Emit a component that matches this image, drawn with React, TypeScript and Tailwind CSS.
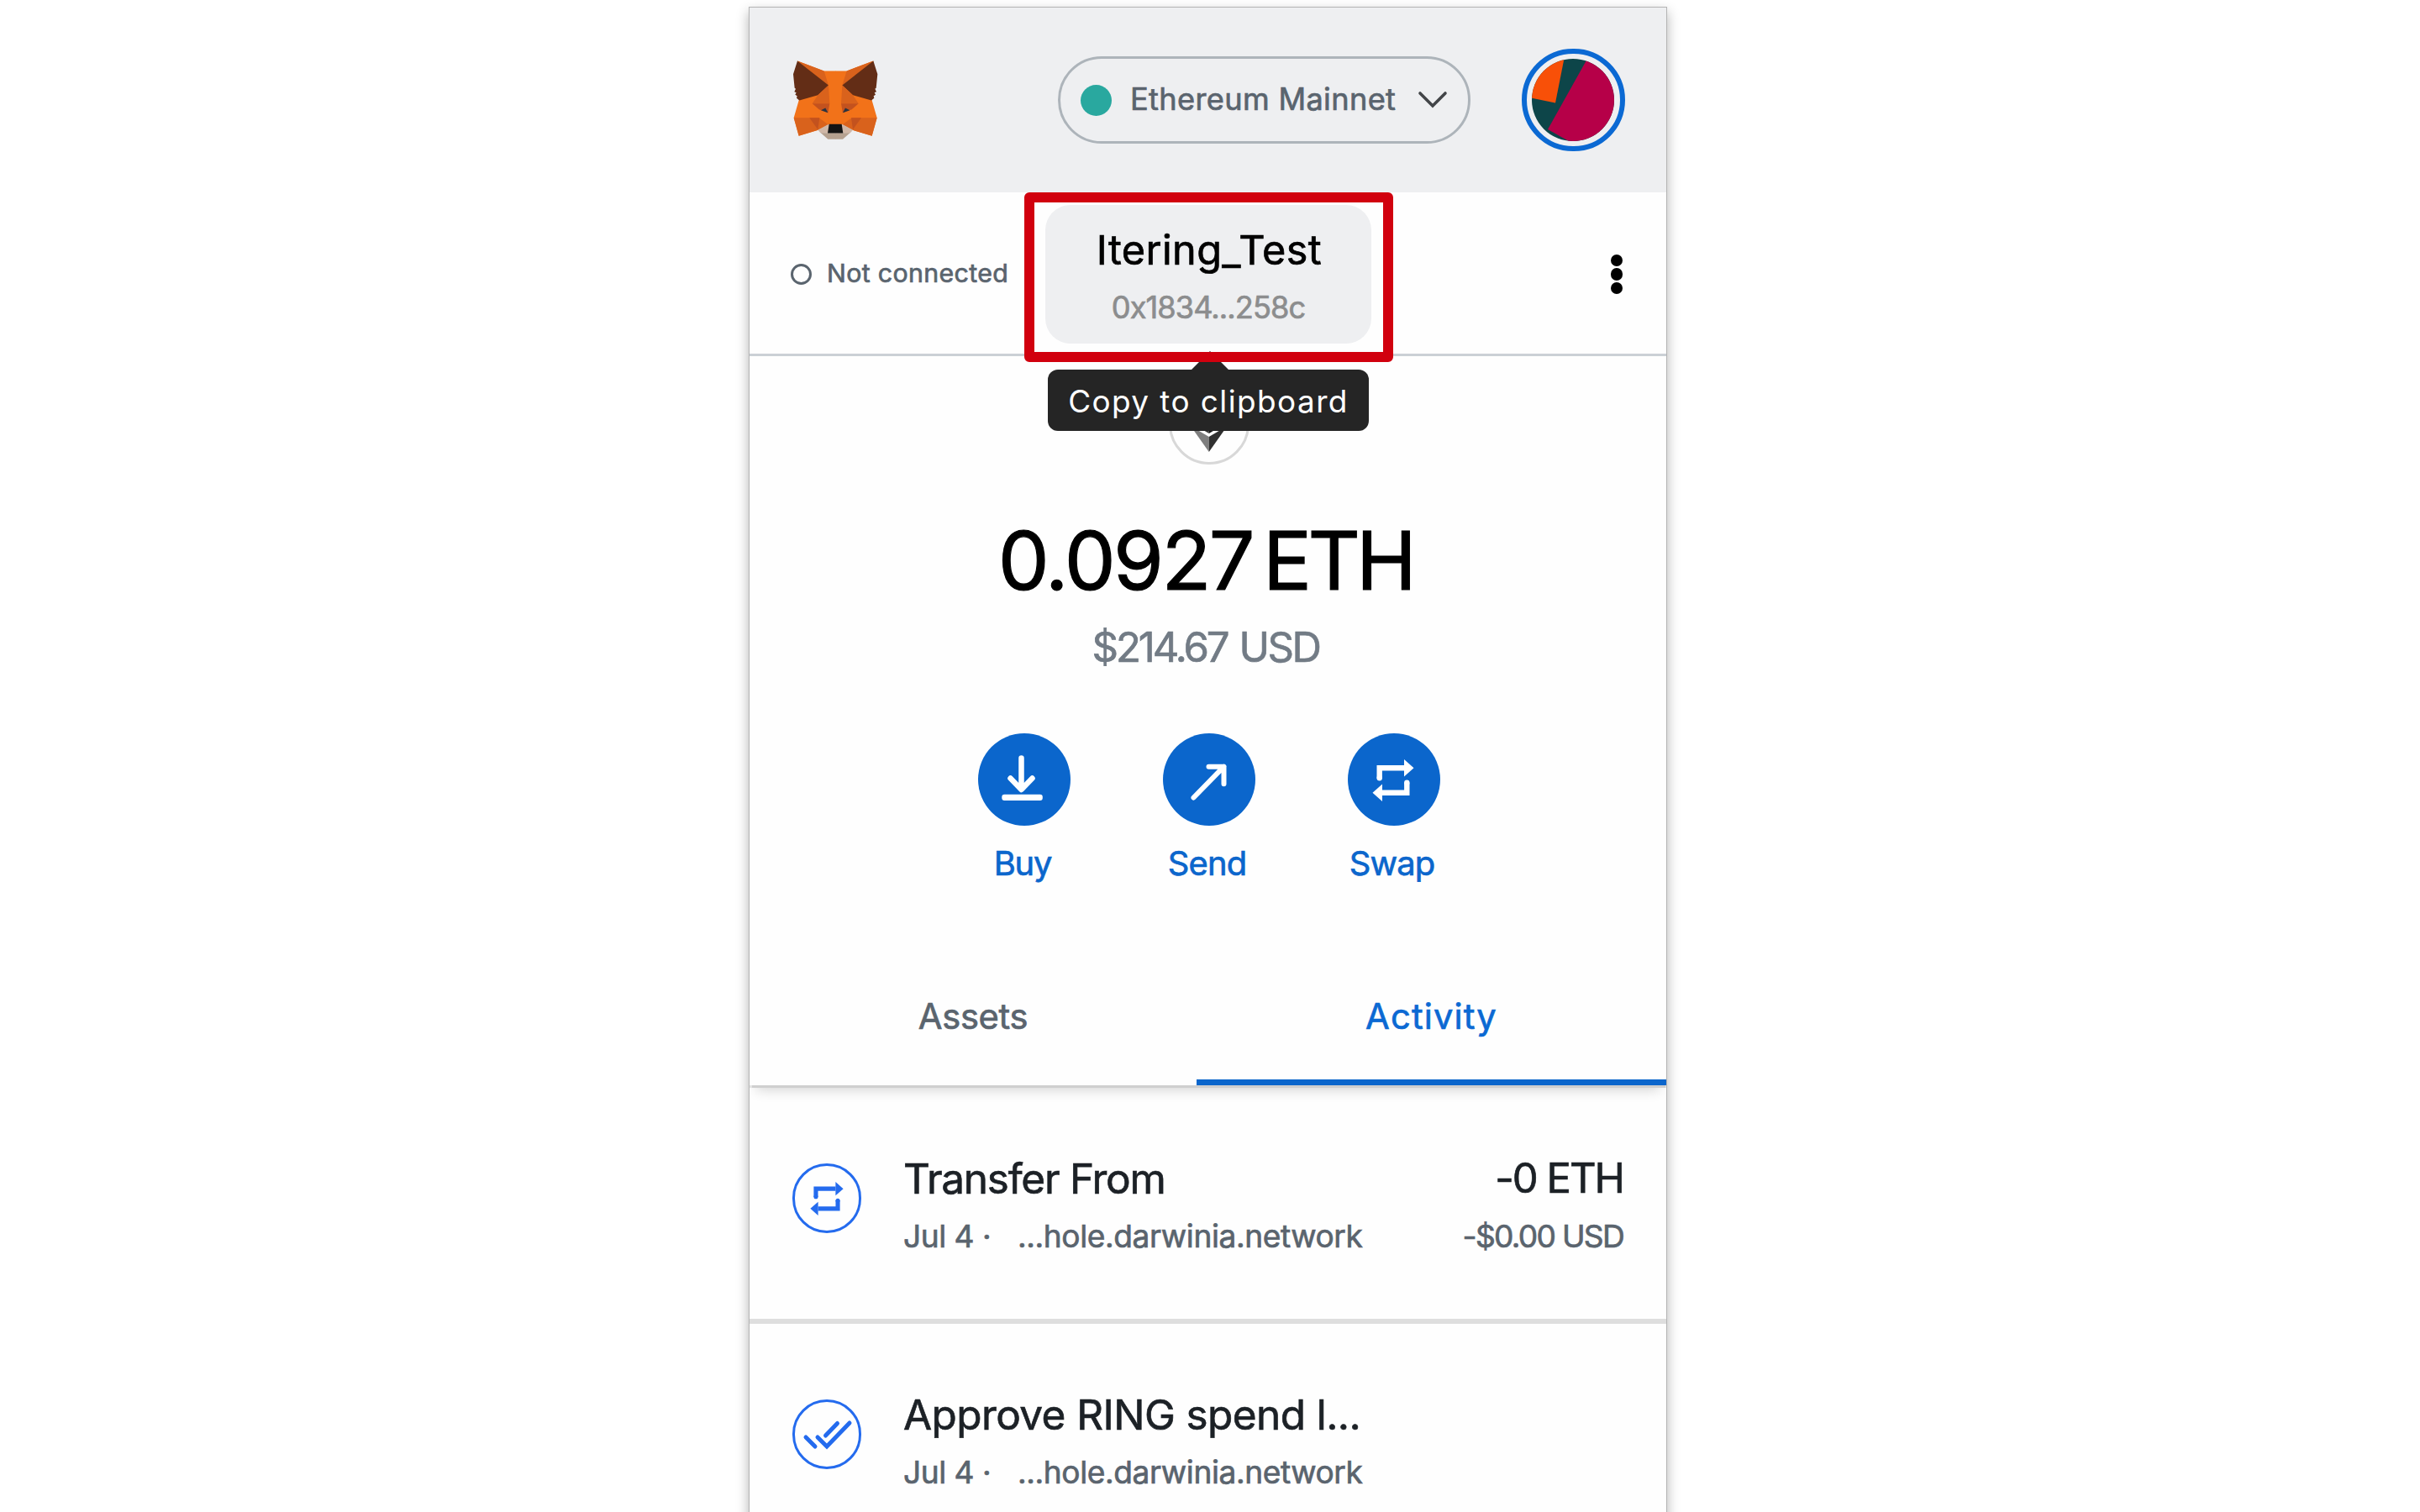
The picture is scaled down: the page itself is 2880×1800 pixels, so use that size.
import React from "react";

function Fox() {
  const half = (
    <>
      <polygon points="57,37 152,73 193,73 193,265 166,265 132,284 62,305 44,240 62,178 58,120" fill="#F27219" />
      <polygon points="57,37 152,73 168,124" fill="#D9621C" />
      <polygon points="57,37 168,124 130,159 64,178 54,170 56,162 49,158 53,150 46,147 51,137 47,134 42,84" fill="#632D16" />
      <polygon points="168,124 130,159 110,189 172,189" fill="#D9621C" />
      <polygon points="110,189 172,189 166,224 134,210" fill="#C3521E" />
      <polygon points="132,212 166,222 170,240 166,265 140,240" fill="#F27219" />
      <polygon points="141,213 157,205 166,222" fill="#2A3441" />
      <polygon points="44,240 134,240 168,265 130,284 62,305" fill="#D9621C" />
      <polygon points="100,240 136,240 130,282" fill="#C3521E" />
      <polygon points="166,264 130,284 142,296 193,296 193,264" fill="#CFB7A7" />
      <polygon points="132,287 142,294 193,296 193,317 166,317" fill="#B5A190" />
      <polygon points="170,263 193,263 193,295 165,295" fill="#141414" />
    </>
  );
  return (
    <svg className="h-[95px] w-[104px] shrink-0" viewBox="36 36 312 284">
      {half}
      <g transform="translate(385 0) scale(-1 1)">{half}</g>
    </svg>
  );
}

function SwapIcon({ className }: { className: string }) {
  return (
    <svg className={className} viewBox="0 0 50 52" fill="none" stroke="currentColor" strokeWidth="6.4">
      <path d="M8.7 23.5V11.2H38" strokeLinejoin="miter" />
      <path d="M41.3 28.5v12.3H12" />
      <circle cx="8.7" cy="23.2" r="3.2" fill="currentColor" stroke="none" />
      <circle cx="41.3" cy="28.8" r="3.2" fill="currentColor" stroke="none" />
      <path d="M38 1l11.5 10.2L38 21.4z" fill="currentColor" stroke="none" />
      <path d="M12 30.600L.5 40.800 12 51z" fill="currentColor" stroke="none" />
    </svg>
  );
}

function Header() {
  return (
    <header className="flex h-[220px] items-center bg-[#eeeff1] pl-[50px]">
      <Fox />
      <div className="ml-[213px] flex h-[104px] w-[491px] items-center rounded-full border-3 border-[#adb4ba] pr-[24px] pl-[24px]">
        <span className="size-[37px] rounded-full bg-[#29a89f]" />
        <span className="mb-[1px] ml-[22px] text-[36.2px] tracking-[0.33px] whitespace-nowrap text-[#5a646e]">Ethereum Mainnet</span>
        <svg className="ml-auto h-[22px] w-[36px]" viewBox="0 0 36 22" fill="none" stroke="#424548" strokeWidth="3.600">
          <path d="M3 3l15 15L33 3" strokeLinecap="round" />
        </svg>
      </div>
      <div className="ml-[61px] flex size-[122.5px] items-center justify-center rounded-full border-[6.5px] border-[#0b69d3]">
        <svg className="size-[98px] rounded-full" viewBox="0 0 98 98">
          <rect width="98" height="98" fill="#0d4549" />
          <path d="M66 0L19 84l32 18h60V0z" fill="#b60048" />
          <path d="M39-3L28 52.500-3 46V-3z" fill="#f85008" />
        </svg>
      </div>
    </header>
  );
}

function AccountBar() {
  return (
    <section className="flex h-[195px] items-start border-b-3 border-[#cbd0d5]">
      <div className="flex h-[192px] w-[352px] items-center pl-[49px]">
        <span className="mt-[2px] size-[25px] rounded-full border-[3.500px] border-[#5a646e]" />
        <span className="mt-[2px] ml-[18px] text-[30.300px] tracking-[0.360px] whitespace-nowrap text-[#5a646e]">Not connected</span>
      </div>
      <div className="relative z-10 mt-[15px] h-[165px] w-[388px] rounded-[30px] bg-[#eeeff1] pt-[24px] text-center">
        <div className="pl-[2px] text-[48.600px] leading-[60px] tracking-[0.380px] text-black">Itering_Test</div>
        <div className="mt-[13px] text-[36.200px] leading-[50px] tracking-[-0.930px] text-[#8c8d8e]">0x1834...258c</div>
        <div className="absolute top-[196px] left-[3px] flex h-[73px] w-[382px] items-center justify-center rounded-[12px] bg-[#252525] pt-[2px] text-[36.900px] tracking-[1.430px] whitespace-nowrap text-white [-webkit-text-stroke:0px]">
          <svg className="absolute -top-[22px] left-[170px] h-[23px] w-[46px]" viewBox="0 0 46 23">
            <path d="M0 23L23 0l23 23z" fill="#252525" />
          </svg>
          Copy to clipboard
        </div>
        <div className="absolute -top-[15px] -right-[26px] -bottom-[22px] -left-[25px] rounded-[6px] border-12 border-[#d1000e]" />
      </div>
      <div className="flex h-[192px] flex-1 flex-col items-end justify-center gap-[2.400px] pt-[3px] pr-[52px]">
        <span className="size-[14.400px] rounded-full bg-black" />
        <span className="size-[14.400px] rounded-full bg-black" />
        <span className="size-[14.400px] rounded-full bg-black" />
      </div>
    </section>
  );
}

function Action({ label, labelClass, children }: { label: string; labelClass: string; children: React.ReactNode }) {
  return (
    <div className="flex w-[110px] flex-col items-center">
      <div className="flex size-[110px] items-center justify-center rounded-full bg-[#0b66cc] text-white">{children}</div>
      <span className={labelClass}>{label}</span>
    </div>
  );
}

function Balance() {
  return (
    <section className="flex flex-col items-center">
      <div className="mt-[33px] ml-[2px] flex size-[96px] justify-center rounded-full border-[3px] border-[#d8d8d8] pt-[7px]">
        <svg className="h-[71px] w-[43.500px]" viewBox="0 0 256 417">
          <path d="M128 0L0 212l128-58z" fill="#8c8c8c" />
          <path d="M128 0l128 212-128-58z" fill="#343434" />
          <path d="M0 212l128 76V154z" fill="#393939" />
          <path d="M256 212l-128 76V154z" fill="#141414" />
          <path d="M0 236l128 181V312z" fill="#7e7e7e" />
          <path d="M256 236L128 417V312z" fill="#303030" />
        </svg>
      </div>
      <div className="mt-[54px] flex gap-[12px] pr-[6px] text-[96.700px] leading-[120px] text-black [-webkit-text-stroke:1.2px]">
        <span className="tracking-[-2.570px]">0.0927</span>
        <span className="tracking-[-4.760px]">ETH</span>
      </div>
      <div className="mt-[13px] flex gap-[14px] pr-[5px] text-[49.100px] leading-[60px] text-[#727b85]">
        <span className="tracking-[-3.070px]">$214.67</span>
        <span className="tracking-[-2.520px]">USD</span>
      </div>
      <div className="mt-[73px] flex gap-[110px] pl-[2px]">
        <Action label="Buy" labelClass="mt-[20px] mr-[3px] text-[39.900px] leading-[50px] tracking-[-1.140px] text-[#0b66cc]">
          <svg className="size-[110px]" viewBox="0 0 110 110" fill="none" stroke="currentColor" strokeWidth="6.500" strokeLinecap="round" strokeLinejoin="round">
            <path d="M51.500 29.500V66M38.500 53.500l13 13.500 13-13.500" />
            <rect x="28.300" y="72.800" width="48.500" height="7.200" rx="3" fill="currentColor" stroke="none" />
          </svg>
        </Action>
        <Action label="Send" labelClass="mt-[20px] mr-[4px] text-[39.900px] leading-[50px] tracking-[-0.810px] text-[#0b66cc]">
          <svg className="size-[110px]" viewBox="0 0 110 110" fill="none" stroke="currentColor" strokeWidth="6" strokeLinecap="round" strokeLinejoin="round">
            <path d="M36.500 76.500L72.500 39.700M54.500 39.700h18v20.500" />
          </svg>
        </Action>
        <Action label="Swap" labelClass="mt-[20px] mr-[4px] text-[39.900px] leading-[50px] tracking-[-0.880px] text-[#0b66cc]">
          <SwapIcon className="mt-[2px] mr-[1px] h-[52px] w-[50px]" />
        </Action>
      </div>
    </section>
  );
}

function Tabs() {
  return (
    <nav className="mt-[74px] flex h-[165px] text-[41.700px] shadow-[0_2.500px_1px_#cfcfcf,0_14px_14px_-8px_rgba(0,0,0,0.16)]">
      <div className="flex w-[532px] items-center justify-center pt-[1px] tracking-[-0.320px] text-[#5a646e]">Assets</div>
      <div className="flex flex-1 items-center justify-center border-b-7 border-[#0b66cc] pt-[8px] tracking-[1.150px] text-[#0b69d3]">Activity</div>
    </nav>
  );
}

function ActivityRow({ icon, title, titleClass, amount, fiat }: { icon: React.ReactNode; title: string; titleClass: string; amount?: string; fiat?: string }) {
  return (
    <li className="flex h-[281px] items-start border-b-[6px] border-[#dedede] pt-[78px] pr-[51px] pl-[50.500px]">
      <div className="mt-[12px] flex size-[82.500px] items-center justify-center rounded-full border-3 border-[#246bee] text-[#246bee]">{icon}</div>
      <div className="ml-[50px] whitespace-nowrap">
        <div className={titleClass}>{title}</div>
        <div className="mt-[14px] flex text-[37.100px] leading-[50px] text-[#5a646e]">
          <span className="w-[136px] tracking-[-0.480px]">Jul 4 ·</span>
          <span className="tracking-[-0.400px]">...hole.darwinia.network</span>
        </div>
      </div>
      {amount && (
        <div className="ml-auto flex flex-col items-end whitespace-nowrap">
          <div className="text-[49px] leading-[60px] tracking-[-2px] text-[#1c2126]">{amount}</div>
          <div className="mt-[14px] text-[37.100px] leading-[50px] tracking-[-1.700px] text-[#5a646e]">{fiat}</div>
        </div>
      )}
    </li>
  );
}

export default function App() {
  return (
    <main className="h-[1800px] w-[2880px] overflow-hidden bg-white pt-[8px] pl-[891px] font-['Inter',sans-serif] [-webkit-text-stroke:0.7px]">
      <div className="h-[1840px] w-[1093px] overflow-hidden border border-[#b4b4b4] bg-[#fefefe] shadow-[0_6px_14px_rgba(0,0,0,0.3)]">
        <Header />
        <AccountBar />
        <Balance />
        <Tabs />
        <ul className="pt-[3px]">
          <ActivityRow
            icon={<SwapIcon className="mt-[2px] h-[42px] w-[40px]" />}
            title="Transfer From"
            titleClass="text-[49.500px] leading-[60px] tracking-[-1.250px] text-[#1c2126]"
            amount="-0 ETH"
            fiat="-$0.00 USD"
          />
          <ActivityRow
            icon={
              <svg className="size-[76px] shrink-0" viewBox="0 0 76 76" fill="none" stroke="currentColor" strokeWidth="5" strokeLinecap="round" strokeLinejoin="miter">
                <path d="M13 42l11 11M27 42l11 11 27-28M36.500 40l14-14.500" />
              </svg>
            }
            title="Approve RING spend l..."
            titleClass="text-[49.500px] leading-[60px] tracking-[-0.590px] text-[#1c2126]"
          />
        </ul>
      </div>
    </main>
  );
}
